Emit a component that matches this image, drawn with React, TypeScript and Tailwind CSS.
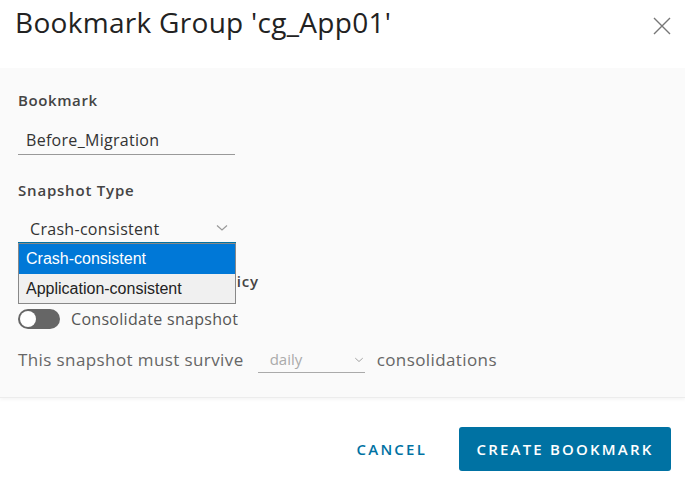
import React from "react";

function Chevron({ className = "" }: { className?: string }) {
  return (
    <svg width="12" height="8" viewBox="0 0 12 8" className={className} fill="none" stroke="currentColor" strokeWidth="1.2">
      <path d="M1 1.5 L6 6 L11 1.5" />
    </svg>
  );
}

export default function App() {
  return (
    <div className="w-[685px] h-[484px] bg-white flex flex-col text-[#333]" style={{ fontFamily: "'Open Sans', 'Liberation Sans', sans-serif" }}>
      <div className="h-[68px] flex items-start justify-between pl-[15px] pr-[14px] pt-[2px]">
        <h1 className="text-[28px] leading-[40px] font-normal text-[#222] tracking-[0.3px]">Bookmark Group 'cg_App01'</h1>
        <svg width="18" height="18" viewBox="0 0 18 18" className="mt-[15px] text-[#777]" stroke="currentColor" strokeWidth="1.4">
          <path d="M1 1 L17 17 M17 1 L1 17" />
        </svg>
      </div>
      <div className="h-[330px] bg-[#fafafa] border-b border-[#ececec] shadow-[0_2px_3px_rgba(0,0,0,0.04)] px-[18px] pt-[22px] flex flex-col">
        <label className="text-[15px] font-semibold text-[#444] leading-[20px] tracking-[0.6px]">Bookmark</label>
        <div className="mt-[16px] w-[217px] h-[29px] border-b border-[#999] pl-[8px] flex items-center text-[16px] text-[#333] tracking-[0.3px]">Before_Migration</div>
        <label className="mt-[25px] text-[15px] font-semibold text-[#444] leading-[20px] tracking-[0.8px]">Snapshot Type</label>
        <div className="relative mt-[17px] w-[218px]">
          <div className="h-[26px] border-b border-[#0072a3] pl-[12px] pr-[8px] flex items-center justify-between text-[16px] text-[#333] tracking-[0.3px]">
            <span className="-mt-[2px]">Crash-consistent</span>
            <Chevron className="text-[#999] -mt-[4px]" />
          </div>
          <div className="absolute left-0 top-[26px] w-[218px] border border-[#888] bg-white z-10 text-[16px]" style={{ fontFamily: "'Liberation Sans', Arial, sans-serif" }}>
            <div className="h-[30px] bg-[#0078d7] text-white pl-[7px] flex items-center">Crash-consistent</div>
            <div className="h-[29px] bg-[#f0f0f0] text-[#222] pl-[7px] flex items-center">Application-consistent</div>
          </div>
        </div>
        <label className="mt-[28px] text-[15px] font-semibold text-[#444] leading-[20px] tracking-[0.8px]">Snapshot Consolidation Policy</label>
        <div className="mt-[16px] flex items-center gap-[11px]">
          <div className="w-[42px] h-[20px] rounded-full bg-[#666] p-[2px] flex items-center">
            <div className="w-[16px] h-[16px] rounded-full bg-white"></div>
          </div>
          <span className="text-[16px] text-[#555] tracking-[0.3px]">Consolidate snapshot</span>
        </div>
        <div className="mt-[16px] flex items-center text-[17px] text-[#666] tracking-[0.4px]">
          <span>This snapshot must survive</span>
          <div className="ml-[14px] w-[107px] h-[26px] border-b border-[#aaa] pl-[12px] pr-0 flex items-center justify-between text-[#aaa] text-[15px] tracking-normal">
            <span>daily</span>
            <Chevron className="text-[#999] scale-75" />
          </div>
          <span className="ml-[12px]">consolidations</span>
        </div>
      </div>
      <div className="flex-1 flex items-start justify-end pr-[14px] pt-[29px] gap-[32px]">
        <button className="h-[44px] px-0 text-[15px] font-semibold tracking-[2.2px] text-[#0072a3]">CANCEL</button>
        <button className="h-[44px] w-[212px] rounded-[3px] bg-[#0072a3] text-white text-[15px] font-semibold tracking-[2.2px]">CREATE BOOKMARK</button>
      </div>
    </div>
  );
}
